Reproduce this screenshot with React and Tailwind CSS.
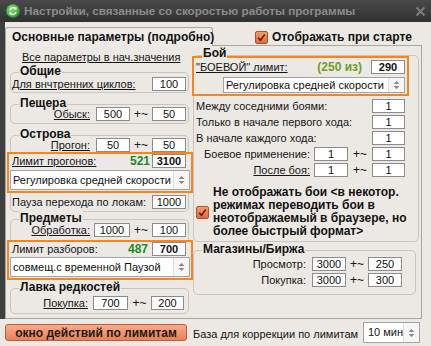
import React from "react";

function Inp({ children, className = "w-[34px]" }) {
  return (
    <div className={`${className} h-[14px] shrink-0 bg-white border border-[#8c8c8c] flex items-center justify-center text-[11px] leading-none text-[#111]`}>
      {children}
    </div>
  );
}

function Arrows() {
  return (
    <svg width="7" height="10" viewBox="0 0 7 10">
      <path d="M3.5 1 L6.5 4 H0.5 Z" fill="#8a8a8a" />
      <path d="M3.5 9 L6.5 6 H0.5 Z" fill="#8a8a8a" />
    </svg>
  );
}

function Select({ text, className = "" }) {
  return (
    <div className={`bg-white border border-[#a3a3a3] flex items-stretch overflow-hidden ${className}`}>
      <div className="flex-1 min-w-0 pl-[2px] flex items-center whitespace-nowrap overflow-hidden text-[11px] text-[#111]">{text}</div>
      <div className="w-[16px] shrink-0 flex items-center justify-center border-l border-[#dedede] bg-[#f6f6f6]">
        <Arrows />
      </div>
    </div>
  );
}

function Group({ title, className = "", headCls = "-mt-[9px] -mb-[4px]", children }) {
  return (
    <div className={`border border-[#c8c5bf] rounded-[5px] ${className}`}>
      <div className={`relative ${headCls} ml-[8px] w-fit px-[1px] h-[14px] leading-[14px] font-bold text-[12px] bg-[#ece9e5] text-[#111]`}>
        {title}
      </div>
      {children}
    </div>
  );
}

function Check() {
  return (
    <div className="w-[13px] h-[13px] shrink-0 rounded-[2px] border border-[#b0512b] bg-linear-to-b from-[#f59a70] to-[#dc6a3c] flex items-center justify-center">
      <svg width="9" height="9" viewBox="0 0 9 9">
        <path d="M1.2 4.8 L3.4 7.2 L7.8 1.6" stroke="#5a2412" strokeWidth="1.6" fill="none" />
      </svg>
    </div>
  );
}

const Plus = ({ className = "w-[22px]" }) => (
  <span className={`${className} shrink-0 text-center text-[12px] leading-none`}>+~</span>
);

export default function App() {
  return (
    <div className="w-[431px] h-[346px] overflow-hidden bg-[#ece9e5] text-[11px] text-[#151515] font-['Liberation_Sans',Arial,sans-serif] flex flex-col">
      {/* Title bar */}
      <div className="h-[22px] shrink-0 flex items-center bg-linear-to-b from-[#4a4a4a] to-[#313131]">
        <svg className="ml-[6px]" width="14" height="14" viewBox="0 0 14 14">
          <defs>
            <radialGradient id="g" cx="40%" cy="35%" r="70%">
              <stop offset="0" stopColor="#8fe27a" />
              <stop offset="1" stopColor="#1f9a2a" />
            </radialGradient>
          </defs>
          <circle cx="7" cy="7" r="6.8" fill="url(#g)" />
          <path d="M4 6.2 A3.2 3.2 0 0 1 9.6 4.6" stroke="#fff" strokeWidth="1.5" fill="none" />
          <path d="M10 7.8 A3.2 3.2 0 0 1 4.4 9.4" stroke="#fff" strokeWidth="1.5" fill="none" />
          <path d="M10.6 3 L10.4 6 L7.8 5 Z" fill="#fff" />
          <path d="M3.4 11 L3.6 8 L6.2 9 Z" fill="#fff" />
        </svg>
        <span className="ml-[4px] font-bold text-[11.7px] text-[#8c8c8c] whitespace-nowrap">
          Настройки, связанные со скоростью работы программы
        </span>
        <svg className="ml-auto mr-[5px]" width="11" height="11" viewBox="0 0 11 11">
          <path d="M1.5 1.5 L9.5 9.5 M9.5 1.5 L1.5 9.5" stroke="#7a7a7a" strokeWidth="2.2" />
        </svg>
      </div>

      {/* Middle */}
      <div className="h-[297px] shrink-0 flex">
        <div className="w-[5px] shrink-0 bg-[#3e3e3e]" />
        <div className="w-[426px] flex flex-col">
          {/* tab row */}
          <div className="h-[23px] shrink-0 flex items-start">
            <div className="relative z-10 mt-[5px] w-[208px] h-[19px] border border-b-0 border-[#aaa7a2] rounded-t-[3px] bg-[#eeebe7] pl-[6px] flex items-center font-bold text-[12px] text-[#111] whitespace-nowrap">
              Основные параметры (подробно)
            </div>
            <div className="ml-[42px] mt-[6px] flex items-center">
              <Check />
              <span className="ml-[4px] font-bold text-[12px] text-[#111] whitespace-nowrap">Отображать при старте</span>
            </div>
          </div>

          {/* panel */}
          <div className="w-[417px] h-[274px] border border-[#aaa7a2] flex">
            {/* left column */}
            <div className="w-[186px] shrink-0 flex flex-col">
              <div className="mt-[4px] h-[14px] leading-[14px] ml-[16px] underline whitespace-nowrap">Все параметры в нач.значения</div>

              <Group title="Общие" className="mt-[8px] ml-[4px] w-[179px] pb-[1px]">
                <div className="mt-[3px] h-[14px] flex items-center justify-between">
                  <span className="ml-[1px] underline whitespace-nowrap">Для внчтренних циклов:</span>
                  <Inp className="w-[34px] mr-[2px]">100</Inp>
                </div>
              </Group>

              <Group title="Пещера" className="mt-[11px] ml-[4px] w-[179px] pb-[2px]">
                <div className="mt-[1px] h-[14px] flex items-center justify-end mr-[2px]">
                  <span className="underline whitespace-nowrap">Обыск:</span>
                  <Inp className="w-[34px] ml-[6px]">500</Inp>
                  <Plus />
                  <Inp className="w-[34px]">50</Inp>
                </div>
              </Group>

              <Group title="Острова" className="mt-[11px] ml-[4px] w-[179px] pb-[2px]">
                <div className="mt-[1px] h-[14px] flex items-center justify-end mr-[2px]">
                  <span className="underline whitespace-nowrap">Прогон:</span>
                  <Inp className="w-[34px] ml-[6px]">50</Inp>
                  <Plus />
                  <Inp className="w-[34px]">50</Inp>
                </div>
                <div className="-ml-[4px] w-[186px] h-[41px] border-2 border-[#f7851f] bg-[#ece9e5] flex flex-col">
                  <div className="h-[14px] flex items-center">
                    <span className="ml-[3px] underline whitespace-nowrap">Лимит прогонов:</span>
                    <span className="ml-auto mr-[2px] font-bold text-[12px] text-[#1f8a1f]">521</span>
                    <Inp className="w-[34px] mr-[5px] font-bold text-[#1f8a1f]">3100</Inp>
                  </div>
                  <Select text="Регулировка средней скорости" className="mt-[2px] mx-[1px] h-[20px]" />
                </div>
                <div className="mt-[2px] h-[14px] flex items-center justify-between">
                  <span className="ml-[1px] whitespace-nowrap">Пауза перехода по локам:</span>
                  <Inp className="w-[34px] mr-[2px]">1000</Inp>
                </div>
              </Group>

              <Group title="Предметы" className="mt-[7px] ml-[4px] w-[179px]">
                <div className="mt-[2px] h-[14px] flex items-center justify-end mr-[2px]">
                  <span className="underline whitespace-nowrap">Обработка:</span>
                  <Inp className="w-[36px] ml-[4px]">1000</Inp>
                  <Plus />
                  <Inp className="w-[34px]">100</Inp>
                </div>
                <div className="mt-[3px] -mb-[1px] -ml-[4px] w-[186px] h-[40px] border-2 border-[#f7851f] bg-[#ece9e5] flex flex-col">
                  <div className="h-[14px] flex items-center">
                    <span className="ml-[3px] whitespace-nowrap">Лимит разборов:</span>
                    <span className="ml-auto mr-[4px] font-bold text-[12px] text-[#1f8a1f]">487</span>
                    <Inp className="w-[34px] mr-[5px] font-bold text-[#1f8a1f]">700</Inp>
                  </div>
                  <Select text="совмещ.с временной Паузой" className="mt-[1px] mx-[1px] h-[20px]" />
                </div>
              </Group>

              <Group title="Лавка редкостей" className="mt-[8px] ml-[4px] w-[179px] pb-[3px]">
                <div className="mt-[6px] h-[14px] flex items-center justify-end mr-[4px]">
                  <span className="underline whitespace-nowrap">Покупка:</span>
                  <Inp className="w-[35px] ml-[5px]">700</Inp>
                  <Plus className="w-[23px]" />
                  <Inp className="w-[33px]">200</Inp>
                </div>
              </Group>
            </div>

            {/* right column */}
            <div className="flex-1 flex flex-col">
              <Group title="Бой" headCls="-mt-[10px] -mb-[4px]" className="mt-[9px] ml-[1px] w-[226px] pb-[3px]">
                <div className="-ml-[2px] w-[217px] h-[40px] border-2 border-[#f7851f] bg-[#ece9e5] flex flex-col">
                  <div className="mt-[2px] h-[14px] flex items-center">
                    <span className="ml-[2px] underline whitespace-nowrap">"БОЕВОЙ" лимит:</span>
                    <span className="ml-auto mr-[9px] font-bold text-[12px] text-[#6f9e1c] whitespace-nowrap">(250 из)</span>
                    <Inp className="w-[34px] mr-[2px] font-bold text-[#1f8a1f]">290</Inp>
                  </div>
                  <Select text="Регулировка средней скорости" className="mt-[3px] ml-[29px] mr-[2px] h-[16px]" />
                </div>
                <div className="mt-[3px] h-[14px] flex items-center justify-between mr-[13px]">
                  <span className="ml-[2px] whitespace-nowrap">Между соседними боями:</span>
                  <Inp className="w-[33px]">1</Inp>
                </div>
                <div className="mt-[2px] h-[14px] flex items-center justify-between mr-[13px]">
                  <span className="ml-[2px] whitespace-nowrap">Только в начале первого хода:</span>
                  <Inp className="w-[33px]">1</Inp>
                </div>
                <div className="mt-[2px] h-[14px] flex items-center justify-between mr-[13px]">
                  <span className="ml-[2px] whitespace-nowrap">В начале каждого хода:</span>
                  <Inp className="w-[33px]">1</Inp>
                </div>
                <div className="mt-[2px] h-[14px] flex items-center justify-end mr-[13px]">
                  <span className="whitespace-nowrap">Боевое применение:</span>
                  <Inp className="w-[34px] ml-[4px]">1</Inp>
                  <Plus className="w-[24px]" />
                  <Inp className="w-[33px]">1</Inp>
                </div>
                <div className="mt-[2px] h-[14px] flex items-center justify-end mr-[13px]">
                  <span className="underline whitespace-nowrap">После боя:</span>
                  <Inp className="w-[34px] ml-[4px]">1</Inp>
                  <Plus className="w-[24px]" />
                  <Inp className="w-[33px]">1</Inp>
                </div>
                <div className="mt-[9px] flex items-center">
                  <div className="ml-[2px]">
                    <Check />
                  </div>
                  <div className="ml-[4px] font-bold text-[12px] leading-[13px] text-[#111] whitespace-nowrap">
                    Не отображать бои &lt;в некотор.
                    <br />
                    режимах переводить бои в
                    <br />
                    неотображаемый в браузере, но
                    <br />
                    более быстрый формат&gt;
                  </div>
                </div>
              </Group>

              <Group title="Магазины/Биржа" className="mt-[8px] ml-[1px] w-[223px] pb-[7px]">
                <div className="mt-[5px] h-[14px] flex items-center justify-end mr-[13px]">
                  <span className="whitespace-nowrap">Просмотр:</span>
                  <Inp className="w-[34px] ml-[6px]">3000</Inp>
                  <Plus />
                  <Inp className="w-[34px]">250</Inp>
                </div>
                <div className="mt-[2px] h-[14px] flex items-center justify-end mr-[13px]">
                  <span className="whitespace-nowrap">Покупка:</span>
                  <Inp className="w-[34px] ml-[6px]">3000</Inp>
                  <Plus />
                  <Inp className="w-[34px]">300</Inp>
                </div>
              </Group>
            </div>
          </div>
        </div>
      </div>

      {/* Bottom row */}
      <div className="h-[27px] shrink-0 flex items-start">
        <div className="ml-[5px] mt-[5px] w-[182px] h-[17px] rounded-[3px] border border-[#b9623f] bg-linear-to-b from-[#f7ab88] to-[#e98058] flex items-center justify-center font-bold text-[12px] text-[#1a1a1a] whitespace-nowrap">
          окно действий по лимитам
        </div>
        <span className="ml-[6px] mt-[8px] h-[14px] leading-[14px] whitespace-nowrap">База для коррекции по лимитам</span>
        <div className="ml-auto mr-[11px] mt-[3px] w-[57px] h-[21px] bg-white border border-[#a3a3a3] flex items-stretch">
          <div className="flex-1 pl-[4px] flex items-center whitespace-nowrap">10 мин</div>
          <div className="w-[16px] flex items-center justify-center border-l border-[#dedede] bg-[#f6f6f6]">
            <Arrows />
          </div>
        </div>
      </div>
    </div>
  );
}
